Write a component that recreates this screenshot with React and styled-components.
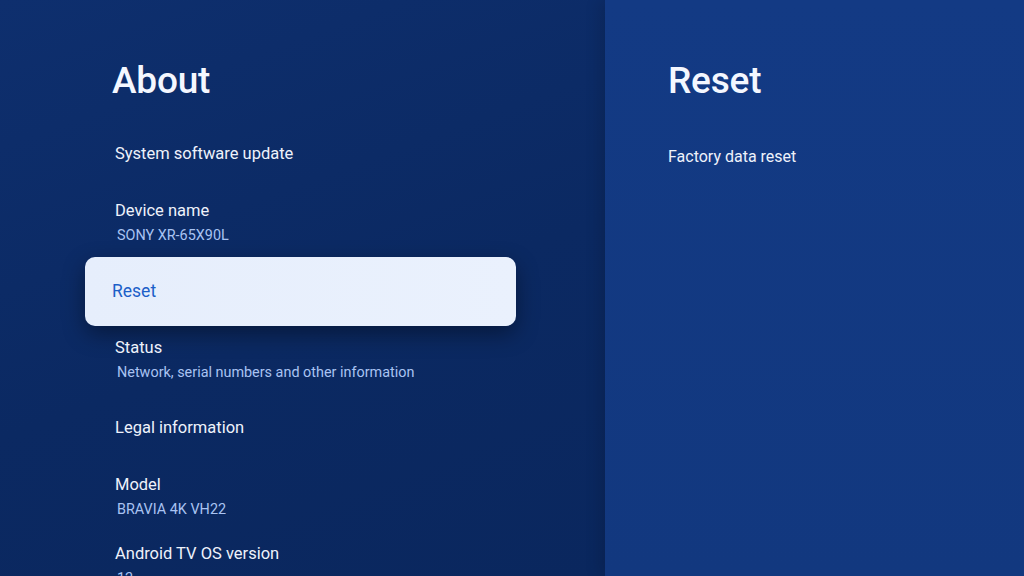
import styled, {createGlobalStyle} from 'styled-components';

const Global=createGlobalStyle`
  html,body{margin:0;padding:0;}
  body{font-family:Roboto,"Noto Sans",sans-serif;background:#0c2a66;}
  #root{width:1024px;height:576px;overflow:hidden;}
`;

const Screen=styled.div`
  width:1024px;height:576px;display:flex;overflow:hidden;
`;

const MainPane=styled.div`
  width:605px;flex:none;
  background:linear-gradient(160deg,#0e2f6e 0%,#0b2962 55%,#0a275e 100%);
  padding-left:85px;box-sizing:border-box;
  display:flex;flex-direction:column;
`;

const SidePane=styled.div`
  flex:1;
  background:linear-gradient(180deg,#133a84 0%,#12387f 100%);
  padding-left:63px;box-sizing:border-box;
  display:flex;flex-direction:column;
  box-shadow:-6px 0 14px rgba(0,0,0,.12);
`;

const Title=styled.h1`
  margin:0;padding:62px 0 0 ${({$pad})=>$pad||0}px;
  height:58px;flex:none;
  font-size:37px;line-height:38px;font-weight:500;color:#f4f7ff;letter-spacing:-.2px;
`;

const List=styled.div`
  display:flex;flex-direction:column;width:431px;
`;

const Row=styled.div`
  height:68.5px;flex:none;box-sizing:border-box;
  padding-left:${({$f})=>$f?27:30}px;
  display:flex;flex-direction:column;justify-content:center;gap:6px;
  border-radius:10px;
  background:${({$f})=>$f?'linear-gradient(90deg,#e6eefc,#eaf1fd)':'transparent'};
  box-shadow:${({$f})=>$f?'0 8px 22px rgba(0,0,0,.38)':'none'};
`;

const RowTitle=styled.div`
  line-height:20px;font-weight:400;
  color:${({$f})=>$f?'#1c5fc8':'#eef2fb'};
  font-size:${({$f})=>$f?'17.5px':'16.5px'};
`;

const RowSub=styled.div`
  font-size:14.4px;line-height:17px;color:#a9c3f2;padding-left:2px;
`;

const SideItem=styled.div`
  height:73px;display:flex;align-items:center;
  font-size:16px;color:#eef2fb;
`;

const items=[
  {t:'System software update'},
  {t:'Device name',s:'SONY XR-65X90L'},
  {t:'Reset',f:true},
  {t:'Status',s:'Network, serial numbers and other information'},
  {t:'Legal information'},
  {t:'Model',s:'BRAVIA 4K VH22'},
  {t:'Android TV OS version',s:'12'},
];

export default function App(){
  return(
    <>
      <Global/>
      <Screen>
        <MainPane>
          <Title $pad={27}>About</Title>
          <List>
            {items.map(i=>(
              <Row key={i.t} $f={i.f}>
                <RowTitle $f={i.f}>{i.t}</RowTitle>
                {i.s&&<RowSub>{i.s}</RowSub>}
              </Row>
            ))}
          </List>
        </MainPane>
        <SidePane>
          <Title>Reset</Title>
          <SideItem>Factory data reset</SideItem>
        </SidePane>
      </Screen>
    </>
  );
}
